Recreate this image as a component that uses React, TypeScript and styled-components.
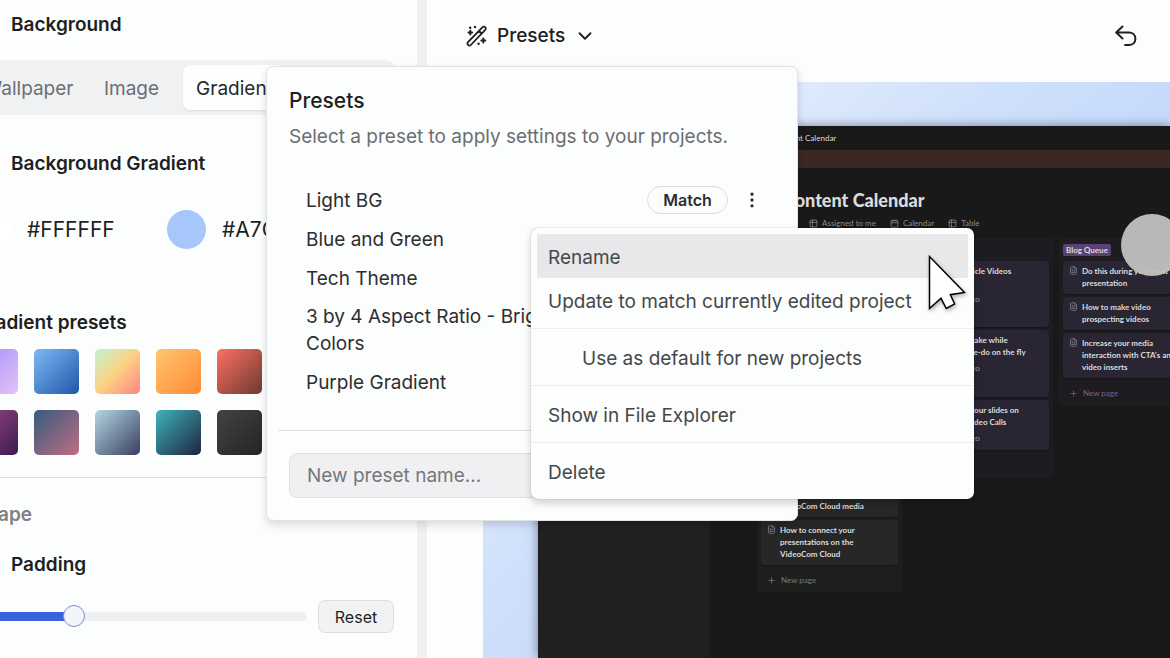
import React from "react";
import styled, { createGlobalStyle } from "styled-components";
import {
  Calendar as CalendarIcon,
  ChevronDown,
  EllipsisVertical,
  FileText,
  Plus,
  Table2,
} from "lucide-react";

const GlobalStyle = createGlobalStyle`
  * { box-sizing: border-box; }
  body {
    margin: 0;
    background: #fcfdfd;
    color: #1d1f22;
    font-family: Inter, "Liberation Sans", sans-serif;
    font-size: 19px;
    line-height: 28px;
  }
  button, input { font: inherit; color: inherit; }
  button { background: none; border: 0; padding: 0; cursor: pointer; }
  h1, h2, h3, p, ul { margin: 0; padding: 0; }
  ul { list-style: none; }
`;

const Page = styled.div`
  display: flex;
  height: 100vh;
  overflow: hidden;
`;

/* ---------- settings sidebar ---------- */

const Sidebar = styled.aside`
  flex: 0 0 427px;
  overflow: hidden;
  border-right: 10px solid #eff0f2;
`;

const SidebarContent = styled.div`
  display: flex;
  flex-direction: column;
  margin-left: -28px;
`;

const Heading = styled.h2<{ $indent?: boolean; $muted?: boolean }>`
  padding-left: ${(p) => (p.$indent ? 39 : 2)}px;
  font-size: 19px;
  font-weight: 600;
  color: ${(p) => (p.$muted ? "#7f8186" : "#1d1f22")};
`;

const Section = styled.section<{ $top: number; $line?: boolean }>`
  display: flex;
  flex-direction: column;
  padding: ${(p) => p.$top}px 23px 0 0;
  border-bottom: ${(p) => (p.$line ? "1px solid #dcdddf" : "0")};
`;

const TabBar = styled.div`
  display: grid;
  grid-template-columns: repeat(4, 1fr);
  height: 55px;
  margin-top: 21px;
  padding: 5px;
  border-radius: 8px;
  background: #f0f1f3;
`;

const Tab = styled.button<{ $active?: boolean }>`
  padding-top: 2px;
  border-radius: 8px;
  background: ${(p) => (p.$active ? "#fdfefe" : "transparent")};
  box-shadow: ${(p) => (p.$active ? "0 1px 2px rgba(0, 0, 0, 0.08)" : "none")};
  color: ${(p) => (p.$active ? "#26282b" : "#6c6e73")};
`;

const ColorRow = styled.div`
  display: flex;
  gap: 16px;
  margin-top: 32px;
`;

const ColorField = styled.label`
  display: flex;
  align-items: center;
  gap: 16px;
`;

const ColorDot = styled.span<{ $color: string }>`
  width: 39px;
  height: 39px;
  border-radius: 50%;
  background: ${(p) => p.$color};
`;

const ColorInput = styled.input`
  width: 124px;
  padding: 0;
  border: 0;
  background: transparent;
  font-size: 21px;
`;

const Swatches = styled.div`
  display: grid;
  grid-template-columns: repeat(7, 45px);
  gap: 16px;
  margin-top: 12px;
  padding: 0 0 22px 1px;
`;

const Swatch = styled.button<{ $fill: string }>`
  height: 45px;
  border-radius: 5px;
  background: ${(p) => p.$fill};
`;

const SliderRow = styled.div`
  display: flex;
  align-items: center;
  gap: 11px;
  margin-top: 21px;
`;

const Slider = styled.input`
  flex: 1;
  min-width: 0;
  height: 22px;
  margin: 0;
  appearance: none;
  background: transparent;

  &::-webkit-slider-runnable-track {
    height: 9px;
    border-radius: 5px;
    background: linear-gradient(to right, #3a62dc 30%, #eff0f2 30%);
  }
  &::-webkit-slider-thumb {
    appearance: none;
    width: 22px;
    height: 22px;
    margin-top: -7px;
    border: 1px solid #7f8fd6;
    border-radius: 50%;
    background: #f2f4f8;
  }
`;

const ResetButton = styled.button`
  width: 76px;
  height: 33px;
  border: 1px solid #dddee0;
  border-radius: 7px;
  background: #f2f2f4;
  font-size: 16px;
`;

/* ---------- main area ---------- */

const Main = styled.main`
  flex: 1;
  min-width: 0;
  display: flex;
  flex-direction: column;
`;

const Toolbar = styled.header`
  position: relative;
  z-index: 1;
  display: flex;
  align-items: center;
  justify-content: space-between;
  height: 82px;
  padding: 0 33px 11px 39px;
`;

const PresetsButton = styled.button`
  display: flex;
  align-items: center;
  gap: 9px;
  font-weight: 500;
`;

const IconButton = styled.button`
  display: flex;
  align-items: center;
  justify-content: center;
`;

/* ---------- presets popover ---------- */

const Popover = styled.div`
  position: absolute;
  top: 66px;
  left: -161px;
  width: 532px;
  height: 455px;
  padding: 20px 11px 0;
  border: 1px solid #e2e3e4;
  border-radius: 7px;
  background: #fcfdfd;
  box-shadow: 0 4px 8px rgba(0, 0, 0, 0.14);
`;

const PopoverTitle = styled.h2`
  padding-left: 11px;
  font-size: 21px;
  font-weight: 500;
`;

const PopoverText = styled.p`
  padding: 8px 0 0 11px;
  color: #6c6e73;
`;

const PresetList = styled.ul`
  display: flex;
  flex-direction: column;
  gap: 11px;
  margin: 35px 24px 0 28px;
`;

const PresetItem = styled.li`
  display: flex;
  align-items: center;
  justify-content: space-between;
  min-height: 28px;
  color: #2c2e31;
  line-height: 27px;
`;

const PresetName = styled.button`
  max-width: 270px;
  line-height: inherit;
  text-align: left;
`;

const PresetActions = styled.div`
  display: flex;
  align-items: center;
  gap: 14px;
`;

const MatchButton = styled.button`
  width: 81px;
  height: 28px;
  border: 1px solid #dcddde;
  border-radius: 14px;
  font-size: 16px;
  font-weight: 600;
  line-height: 20px;
`;

const PopoverFooter = styled.div`
  margin-top: 34px;
  padding: 22px 11px 0;
  border-top: 1px solid #dfe0e1;
`;

const NameInput = styled.input`
  width: 100%;
  height: 45px;
  padding: 0 17px;
  border: 1px solid #dfe0e2;
  border-radius: 8px;
  background: #f0f0f2;

  &::placeholder { color: #75777b; opacity: 1; }
`;

const Menu = styled.div`
  position: absolute;
  top: 228px;
  left: 104px;
  width: 443px;
  padding: 6px;
  border-radius: 7px;
  background: #fcfdfd;
  box-shadow: 0 0 1px rgba(0, 0, 0, 0.4), 0 4px 8px rgba(0, 0, 0, 0.18);
`;

const MenuItem = styled.button<{ $active?: boolean; $indent?: boolean }>`
  display: block;
  width: 100%;
  height: 44px;
  padding: 3px 0 0 ${(p) => (p.$indent ? 45 : 11)}px;
  background: ${(p) => (p.$active ? "#e8e8ea" : "transparent")};
  color: #45474a;
  text-align: left;
`;

const MenuLine = styled.hr`
  height: 1px;
  margin: 6px -6px;
  border: 0;
  background: #eceded;
`;

const Cursor = styled.svg`
  position: absolute;
  top: 254px;
  left: 499px;
  filter: drop-shadow(1px 2px 2px rgba(0, 0, 0, 0.3));
`;

/* ---------- recording preview ---------- */

const Stage = styled.div`
  flex: 1;
  min-height: 0;
  margin-left: 56px;
  padding: 44px 0 0 55px;
  display: flex;
  overflow: hidden;
  background: linear-gradient(135deg, #ffffff -10%, #cfe0fb 42%, #a7c8fb 100%);
`;

const Recording = styled.div`
  position: relative;
  flex: 1;
  min-width: 0;
  display: flex;
  flex-direction: column;
  background: #191919;
  box-shadow: 0 0 10px rgba(20, 30, 60, 0.5);
  font-family: Lato, "Open Sans", sans-serif;
  font-size: 8px;
  line-height: 12px;
  color: #dcdcdc;
`;

const Workspace = styled.div`
  flex: 1;
  min-height: 0;
  display: flex;
`;

const WorkspaceNav = styled.div`
  flex: 0 0 172px;
  background: #202020;
`;

const Document = styled.div`
  flex: 1;
  min-width: 0;
  overflow: hidden;
`;

const Crumb = styled.div`
  height: 24px;
  padding: 6px 0 0 42px;
`;

const Cover = styled.div`
  height: 18px;
  background: #3a2822;
`;

const DocumentTitle = styled.h1`
  padding: 20px 0 0 73px;
  font-size: 18px;
  font-weight: 900;
  line-height: 24px;
`;

const Views = styled.div`
  display: flex;
  gap: 14px;
  height: 26px;
  padding: 5px 0 0 99px;
  color: #8b8b8b;
`;

const View = styled.span`
  display: flex;
  align-items: center;
  gap: 4px;
  height: 12px;
`;

const Board = styled.div`
  display: grid;
  grid-template-columns: repeat(3, 145px);
  align-items: start;
  gap: 6px;
  padding-left: 47px;
`;

const Column = styled.section<{ $tone: string; $height: number }>`
  display: flex;
  flex-direction: column;
  gap: 3px;
  min-height: ${(p) => p.$height}px;
  padding: 6px 4px 0;
  background: ${(p) => p.$tone};
`;

const Tag = styled.span`
  align-self: flex-start;
  height: 12px;
  margin-bottom: 2px;
  padding: 0 3px;
  border-radius: 2px;
  background: #5b4275;
  font-weight: 700;
`;

const Card = styled.article<{ $tone: string; $height?: number; $push?: boolean }>`
  display: flex;
  gap: 4px;
  min-height: ${(p) => p.$height ?? 33}px;
  margin-top: ${(p) => (p.$push ? "auto" : "0")};
  padding: 4px 6px 5px;
  border-radius: 4px;
  background: ${(p) => p.$tone};
  box-shadow: 0 1px 1px rgba(0, 0, 0, 0.3);
  font-weight: 700;
  white-space: pre-line;

  svg { flex: none; margin-top: 1px; color: #85818e; }
`;

const CardStatus = styled.span`
  display: block;
  margin-top: 4px;
  color: #9d99a5;
  font-weight: 400;
`;

const NewPage = styled.button<{ $color: string }>`
  display: flex;
  align-items: center;
  gap: 5px;
  height: 24px;
  padding-left: 6px;
  color: ${(p) => p.$color};
`;

const WebcamBubble = styled.div`
  position: absolute;
  top: 88px;
  left: 583px;
  width: 62px;
  height: 62px;
  border-radius: 50%;
  background: rgba(190, 190, 190, 0.97);
`;

const swatches = [
  "linear-gradient(135deg, #a18cf5, #e3c3fa)",
  "linear-gradient(135deg, #7db9f6, #1f57a8)",
  "linear-gradient(135deg, #c1f5cf, #fdd183 50%, #fb8483)",
  "linear-gradient(135deg, #ffc66e, #ff8a32)",
  "linear-gradient(135deg, #ff6f61, #6d3a32)",
];

const darkSwatches = [
  "linear-gradient(135deg, #9b4a83, #3e1a52)",
  "linear-gradient(135deg, #355c7d, #c06c84)",
  "linear-gradient(135deg, #b4d8e2, #3a3d62)",
  "linear-gradient(135deg, #3db4ba, #1f2340)",
  "linear-gradient(135deg, #434343, #232423)",
];

const swatchNames = ["Lilac", "Blue", "Sunrise", "Orange", "Ember"];
const darkSwatchNames = ["Plum", "Dusk", "Slate", "Teal", "Graphite"];

const PURPLE = "#2a2533";
const GREY = "#272727";

function WandIcon() {
  return (
    <svg width="22" height="22" viewBox="0 0 22 22" fill="none" stroke="currentColor" strokeWidth="1.8" strokeLinecap="round" strokeLinejoin="round" aria-hidden="true">
      <path d="M2 17.2 16.6 2.2a1.7 1.7 0 0 1 2.6 0 1.9 1.9 0 0 1 0 2.7L4.8 20a1.8 1.8 0 0 1-2.7 0 1.9 1.9 0 0 1-.1-2.8ZM13 6l2.8 2.7" />
      <path d="M4.3 5.8v3.6M2.5 7.6h3.6M17.3 13.4v4M15.3 15.4h4" strokeWidth="2" />
      <path d="M9 2v.1M12.6 18.6v.1M4.2 2.6v.1" strokeWidth="2.4" />
    </svg>
  );
}

function UndoIcon() {
  return (
    <svg width="22" height="22" viewBox="0 0 22 22" fill="none" stroke="currentColor" strokeWidth="2" strokeLinecap="round" strokeLinejoin="round" aria-hidden="true">
      <path d="M7.500 1.500 1.200 7.500l6.300 6M1.500 7.500h12.300c3.900 0 6.600 2.700 6.600 6.300s-2.700 6.300-6.600 6.300h-3.700" />
    </svg>
  );
}

function PageCard({ text, tone, height, push, status }: { text: string; tone: string; height?: number; push?: boolean; status?: string }) {
  return (
    <Card $tone={tone} $height={height} $push={push}>
      <FileText size={9} strokeWidth={2} />
      <div>
        {text}
        {status && <CardStatus>{status}</CardStatus>}
      </div>
    </Card>
  );
}

export default function App() {
  return (
    <Page>
      <GlobalStyle />
      <Sidebar>
        <SidebarContent>
          <Section $top={11}>
            <Heading $indent>Background</Heading>
            <TabBar>
              <Tab>Wallpaper</Tab>
              <Tab>Image</Tab>
              <Tab $active>Gradient</Tab>
            </TabBar>
          </Section>
          <Section $top={35}>
            <Heading $indent>Background Gradient</Heading>
            <ColorRow>
              <ColorField>
                <ColorDot $color="#ffffff" />
                <ColorInput aria-label="Start color" defaultValue="#FFFFFF" />
              </ColorField>
              <ColorField>
                <ColorDot $color="#a7c7fb" />
                <ColorInput aria-label="End color" defaultValue="#A7C7FB" />
              </ColorField>
            </ColorRow>
          </Section>
          <Section $top={60} $line>
            <Heading>Gradient presets</Heading>
            <Swatches>
              {swatches.map((fill, i) => (
                <Swatch key={fill} $fill={fill} aria-label={swatchNames[i]} style={{ gridColumn: i + 1 }} />
              ))}
              {darkSwatches.map((fill, i) => (
                <Swatch key={fill} $fill={fill} aria-label={darkSwatchNames[i]} style={{ gridColumn: i + 1 }} />
              ))}
            </Swatches>
          </Section>
          <Section $top={23}>
            <Heading $muted>Shape</Heading>
          </Section>
          <Section $top={22}>
            <Heading $indent>Padding</Heading>
            <SliderRow>
              <Slider type="range" min={0} max={100} defaultValue={29} aria-label="Padding" />
              <ResetButton>Reset</ResetButton>
            </SliderRow>
          </Section>
        </SidebarContent>
      </Sidebar>

      <Main>
        <Toolbar>
          <PresetsButton>
            <WandIcon />
            Presets
            <ChevronDown size={22} strokeWidth={2} />
          </PresetsButton>
          <IconButton aria-label="Undo">
            <UndoIcon />
          </IconButton>

          <Popover role="dialog" aria-label="Presets">
            <PopoverTitle>Presets</PopoverTitle>
            <PopoverText>Select a preset to apply settings to your projects.</PopoverText>
            <PresetList>
              <PresetItem>
                <PresetName>Light BG</PresetName>
                <PresetActions>
                  <MatchButton>Match</MatchButton>
                  <IconButton aria-label="More options">
                    <EllipsisVertical size={20} strokeWidth={2} />
                  </IconButton>
                </PresetActions>
              </PresetItem>
              <PresetItem><PresetName>Blue and Green</PresetName></PresetItem>
              <PresetItem><PresetName>Tech Theme</PresetName></PresetItem>
              <PresetItem><PresetName>3 by 4 Aspect Ratio - Bright Colors</PresetName></PresetItem>
              <PresetItem><PresetName>Purple Gradient</PresetName></PresetItem>
            </PresetList>
            <PopoverFooter>
              <NameInput aria-label="New preset name" placeholder="New preset name..." />
            </PopoverFooter>
          </Popover>

          <Menu role="menu">
            <MenuItem role="menuitem" $active>Rename</MenuItem>
            <MenuItem role="menuitem">Update to match currently edited project</MenuItem>
            <MenuLine />
            <MenuItem role="menuitem" $indent>Use as default for new projects</MenuItem>
            <MenuLine />
            <MenuItem role="menuitem">Show in File Explorer</MenuItem>
            <MenuLine />
            <MenuItem role="menuitem">Delete</MenuItem>
          </Menu>

          <Cursor width="42" height="60" viewBox="0 0 42 60" aria-hidden="true">
            <path d="M3.500 2.500v52L15 44.300l5.300 10.200 8.400-4.500-4.400-9.300 14.200-2.200Z" fill="#fff" stroke="#000" strokeWidth="1.500" />
          </Cursor>
        </Toolbar>

        <Stage>
          <Recording>
            <Workspace>
              <WorkspaceNav />
              <Document>
                <Crumb>VC &nbsp;/&nbsp; Content Calendar</Crumb>
                <Cover />
                <DocumentTitle>Content Calendar</DocumentTitle>
                <Views>
                  <View><Table2 size={9} />Assigned to me</View>
                  <View><CalendarIcon size={9} />Calendar</View>
                  <View><Table2 size={9} />Table</View>
                </Views>
                <Board>
                  <Column $tone="#1e1e1e" $height={354}>
                    <PageCard tone={GREY} height={45} push text={"How to upload your\nfirst videos to\nVideoCom Cloud media"} />
                    <PageCard tone={GREY} height={45} text={"How to connect your\npresentations on the\nVideoCom Cloud"} />
                    <NewPage $color="#7a7a7a"><Plus size={9} />New page</NewPage>
                  </Column>
                  <Column $tone="#1e1c20" $height={240}>
                    <Tag>In Progress</Tag>
                    <PageCard tone={PURPLE} height={66} text={"Convert Article Videos\n\u00a0"} status="Tutorial Video" />
                    <PageCard tone={PURPLE} height={67} text={"Stop and retake while\nrecording. Re-do on the fly"} status="Tutorial Video" />
                    <PageCard tone={PURPLE} height={50} text={"Present all your slides on\nyour next Video Calls"} status="Tutorial Video" />
                  </Column>
                  <Column $tone="#1e1c20" $height={168}>
                    <Tag>Blog Queue</Tag>
                    <PageCard tone={PURPLE} text={"Do this during your next\npresentation"} />
                    <PageCard tone={PURPLE} text={"How to make video\nprospecting videos"} />
                    <PageCard tone={PURPLE} text={"Increase your media\ninteraction with CTA's and\nvideo inserts"} />
                    <NewPage $color="#77608f"><Plus size={9} />New page</NewPage>
                  </Column>
                </Board>
              </Document>
            </Workspace>
            <WebcamBubble />
          </Recording>
        </Stage>
      </Main>
    </Page>
  );
}
